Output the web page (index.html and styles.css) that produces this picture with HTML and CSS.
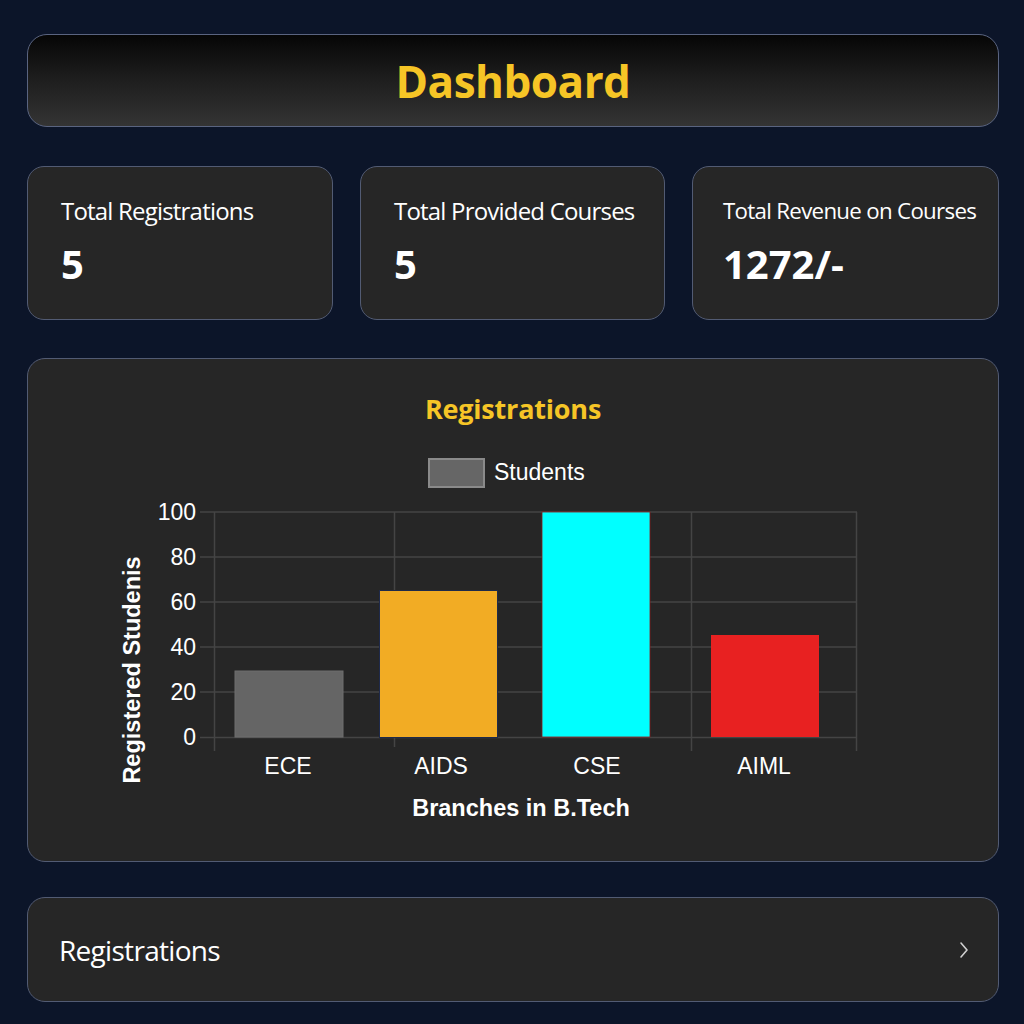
FILE: index.html
```html
<!DOCTYPE html>
<html lang="en">
<head>
<meta charset="utf-8">
<title>Dashboard</title>
<link rel="stylesheet" href="styles.css">
</head>
<body>
<main class="page">
  <header class="hero">
    <h1 class="hero-title">Dashboard</h1>
  </header>

  <section class="stats">
    <div class="stat-card">
      <div class="stat-label">Total Registrations</div>
      <div class="stat-value">5</div>
    </div>
    <div class="stat-card">
      <div class="stat-label">Total Provided Courses</div>
      <div class="stat-value">5</div>
    </div>
    <div class="stat-card stat-card--wide">
      <div class="stat-label stat-label--long">Total Revenue on Courses</div>
      <div class="stat-value">1272/-</div>
    </div>
  </section>

  <section class="chart-card">
    <h2 class="chart-title">Registrations</h2>
    <svg class="chart" width="970" height="424" viewBox="28 426 970 424" xmlns="http://www.w3.org/2000/svg">
      <!-- legend -->
      <rect x="429" y="460" width="55" height="28" fill="#666666" stroke="#8a8a8a" stroke-width="2"/>
      <text class="legend-text" x="494" y="481">Students</text>

      <!-- grid -->
      <g stroke="#444" stroke-width="1.5">
        <line x1="200" y1="513" x2="857" y2="513"/>
        <line x1="200" y1="558" x2="857" y2="558"/>
        <line x1="200" y1="603" x2="857" y2="603"/>
        <line x1="200" y1="648" x2="857" y2="648"/>
        <line x1="200" y1="693" x2="857" y2="693"/>
        <line x1="200" y1="738.5" x2="857" y2="738.5"/>
        <line x1="214.5" y1="513" x2="214.5" y2="752"/>
        <line x1="394.5" y1="513" x2="394.5" y2="748"/>
        <line x1="691.5" y1="513" x2="691.5" y2="752"/>
        <line x1="856.5" y1="513" x2="856.5" y2="752"/>
      </g>

      <!-- bars -->
      <rect x="235" y="672" width="108" height="66" fill="#656565" stroke="#6e6e6e" stroke-width="1"/>
      <rect x="379.5" y="591.5" width="118" height="147" fill="#f2ac24" stroke="#1f2a4a" stroke-width="1"/>
      <rect x="542" y="513" width="108" height="225" fill="#00ffff" stroke="#8a1a1a" stroke-width="0.8"/>
      <rect x="711" y="636" width="108" height="102" fill="#e82121"/>

      <!-- y ticks -->
      <g class="tick-text" text-anchor="end">
        <text x="196" y="521">100</text>
        <text x="196" y="566">80</text>
        <text x="196" y="611">60</text>
        <text x="196" y="656">40</text>
        <text x="196" y="701">20</text>
        <text x="196" y="746">0</text>
      </g>

      <!-- x labels -->
      <g class="tick-text" text-anchor="middle">
        <text x="288" y="775">ECE</text>
        <text x="441" y="775">AIDS</text>
        <text x="597" y="775">CSE</text>
        <text x="764" y="775">AIML</text>
      </g>

      <text class="axis-title" x="521" y="817" text-anchor="middle">Branches in B.Tech</text>
      <text class="axis-title" transform="translate(140 671) rotate(-90)" text-anchor="middle">Registered Studenis</text>
    </svg>
  </section>

  <a class="nav-card" href="#">
    <span class="nav-label">Registrations</span>
    <svg class="chevron" width="12" height="18" viewBox="0 0 12 18" xmlns="http://www.w3.org/2000/svg">
      <path d="M3 2 L9 9 L3 16" fill="none" stroke="#d0d0d0" stroke-width="1.6" stroke-linecap="round" stroke-linejoin="round"/>
    </svg>
  </a>
</main>
</body>
</html>
```

FILE: styles.css
```css
* {
  box-sizing: border-box;
}

html, body {
  margin: 0;
  padding: 0;
}

body {
  background: #0c1529;
  font-family: "Open Sans", "Noto Sans", sans-serif;
  color: #ffffff;
  width: 1024px;
  height: 1024px;
  overflow: hidden;
}

.page {
  width: 972px;
  margin-left: 27px;
  padding-top: 34px;
  display: flex;
  flex-direction: column;
}

.hero {
  height: 93px;
  border: 1.5px solid #5a6480;
  border-radius: 20px;
  background: linear-gradient(180deg, #060606 0%, #1c1c1c 45%, #343434 100%);
  display: flex;
  align-items: center;
  justify-content: center;
}

.hero-title {
  margin: 0;
  font-size: 44px;
  font-weight: 700;
  color: #f6c526;
  letter-spacing: -0.5px;
  line-height: 1;
}

.stats {
  margin-top: 39px;
  display: grid;
  grid-template-columns: 306px 305px 307px;
  column-gap: 27px;
}

.stat-card {
  height: 154px;
  border: 1.5px solid #525b73;
  border-radius: 17px;
  background: #262626;
  padding: 29px 0 0 33px;
}

.stat-card--wide {
  padding-left: 30px;
}

.stat-label {
  font-size: 24px;
  line-height: 30px;
  letter-spacing: -0.8px;
  color: #ffffff;
}

.stat-label--long {
  font-size: 22.3px;
  letter-spacing: -0.7px;
}

.stat-value {
  margin-top: 15px;
  font-size: 40px;
  font-weight: 700;
  line-height: 46px;
  color: #ffffff;
}

.chart-card {
  margin-top: 38px;
  height: 504px;
  border: 1.5px solid #525b73;
  border-radius: 18px;
  background: #262626;
  padding-top: 34px;
}

.chart-title {
  margin: 0;
  height: 32px;
  font-size: 27px;
  line-height: 32px;
  font-weight: 700;
  text-align: center;
  color: #f6c526;
  letter-spacing: -0.2px;
}

.chart {
  display: block;
}

.legend-text,
.tick-text text {
  font-family: "Liberation Sans", Arial, sans-serif;
  font-size: 23px;
  fill: #ffffff;
}

.axis-title {
  font-family: "Liberation Sans", Arial, sans-serif;
  font-size: 23.5px;
  font-weight: 700;
  fill: #ffffff;
}

.nav-card {
  margin-top: 35px;
  height: 105px;
  border: 1.5px solid #525b73;
  border-radius: 18px;
  background: #262626;
  display: flex;
  align-items: center;
  justify-content: space-between;
  padding: 0 28px 0 31px;
  text-decoration: none;
  color: #ffffff;
}

.nav-label {
  font-size: 28px;
  letter-spacing: -0.7px;
  color: #ffffff;
}

.chevron {
  display: block;
}
```
